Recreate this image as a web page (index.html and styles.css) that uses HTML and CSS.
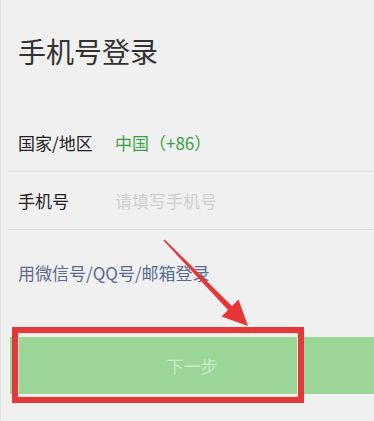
FILE: index.html
```html
<!DOCTYPE html>
<html lang="zh">
<head>
<meta charset="utf-8">
<link rel="stylesheet" href="styles.css">
</head>
<body>
<div class="page">
  <h1 class="title">手机号登录</h1>
  <div class="form">
    <div class="row row-first">
      <span class="label">国家/地区</span>
      <span class="value">中国（+86）</span>
    </div>
    <div class="row">
      <span class="label">手机号</span>
      <span class="placeholder">请填写手机号</span>
    </div>
  </div>
  <a class="alt-link">用微信号/QQ号/邮箱登录</a>
  <div class="btn">下一步</div>
  <div class="frame"></div>
  <svg class="arrow" width="110" height="100" viewBox="0 0 110 100">
    <polygon points="13.6,9.4 81,76 87.5,69.5 97,96 70.5,86.5 77,80 12.4,10.6" fill="#e63638"/>
  </svg>
</div>
</body>
</html>
```
FILE: styles.css
```css
html, body {
  margin: 0;
  padding: 0;
  background: #f0f0f0;
}
body {
  font-family: "Noto Sans CJK SC", "Noto Sans", sans-serif;
  width: 374px;
  height: 421px;
  overflow: hidden;
}
.page {
  position: relative;
  height: 421px;
  border-left: 1px solid #e2e2e2;
  box-sizing: border-box;
}
.title {
  margin: 0;
  padding: 31px 0 0 17px;
  font-size: 28px;
  line-height: 40px;
  font-weight: 400;
  color: #333;
}
.form {
  margin-top: 42px;
  margin-left: 7px;
}
.row {
  display: flex;
  align-items: center;
  height: 57px;
  padding-left: 10px;
  border-bottom: 1px solid #dcdcdc;
  font-size: 17px;
}
.row-first {
  height: 58px;
}
.label {
  width: 97px;
  color: #222;
}
.value {
  color: #3aa143;
}
.placeholder {
  color: #cfcfcf;
}
.alt-link {
  display: block;
  margin: 31px 0 0 17px;
  font-size: 17px;
  line-height: 24px;
  color: #5a6a90;
}
.btn {
  margin: 52px 0 0 9px;
  height: 57px;
  background: #9cd598;
  color: #c9ebc6;
  font-size: 17px;
  display: flex;
  align-items: center;
  justify-content: center;
}
.frame {
  position: absolute;
  left: 11px;
  top: 327px;
  width: 292px;
  height: 76px;
  box-sizing: border-box;
  border: 6px solid #e23a3c;
  box-shadow: inset 0 0 0 1px #f3e6c4;
}
.arrow {
  position: absolute;
  left: 150px;
  top: 230px;
}
```
